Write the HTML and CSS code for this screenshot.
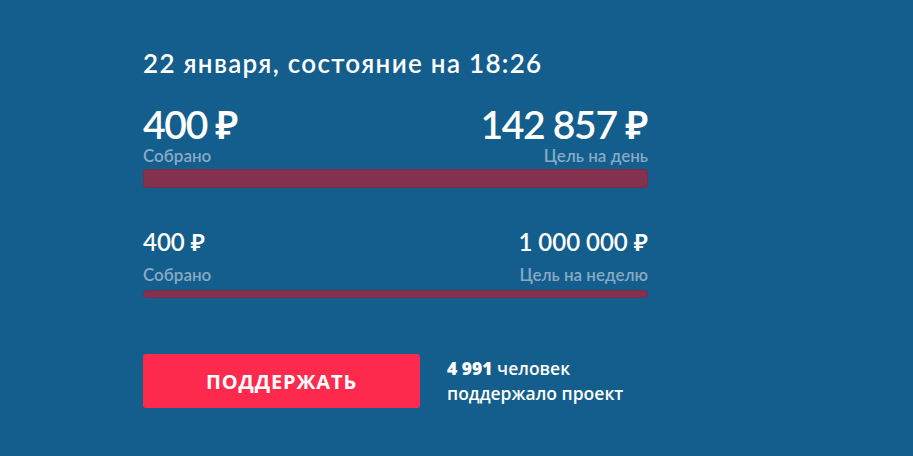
FILE: index.html
```html
<!DOCTYPE html>
<html lang="ru">
<head>
    <meta charset="utf-8">
    <title>Сбор средств</title>
    <link rel="stylesheet" href="styles.css">
</head>
<body>
    <div class="panel">
        <h1 class="title">22 января, состояние на 18:26</h1>

        <div class="goal goal-day">
            <div class="goal-row">
                <div class="sum">400 ₽</div>
                <div class="sum">142 857 ₽</div>
            </div>
            <div class="goal-row">
                <div class="label">Собрано</div>
                <div class="label">Цель на день</div>
            </div>
            <div class="bar"></div>
        </div>

        <div class="goal goal-week">
            <div class="goal-row">
                <div class="sum">400 ₽</div>
                <div class="sum">1 000 000 ₽</div>
            </div>
            <div class="goal-row">
                <div class="label">Собрано</div>
                <div class="label">Цель на неделю</div>
            </div>
            <div class="bar"></div>
        </div>

        <div class="support">
            <button class="btn">ПОДДЕРЖАТЬ</button>
            <p class="backers"><b>4 991</b> человек<br>поддержало проект</p>
        </div>
    </div>
</body>
</html>
```
FILE: styles.css
```css
*{
    margin: 0;
    padding: 0;
    box-sizing: border-box;
}
body{
    background: #135e8c;
    color: #fff;
    font-family: Lato, "Noto Sans", sans-serif;
    height: 456px;
    overflow: hidden;
}

.panel{
    width: 505px;
    margin-left: 143px;
    padding-top: 48px;
}

.title{
    font-size: 26px;
    font-weight: 600;
    line-height: 30px;
    letter-spacing: 1.3px;
}

.goal-row{
    display: flex;
    justify-content: space-between;
}

.sum{
    font-weight: 600;
}

.goal-day{
    margin-top: 24px;
}
.goal-day .sum{
    font-size: 39px;
    line-height: 44px;
    letter-spacing: -1.3px;
}
.goal-day .sum:last-child{
    margin-right: 1px;
}
.goal-day .bar{
    height: 19px;
    margin-top: 3px;
    border-radius: 3px;
}

.goal-week{
    margin-top: 40px;
}
.goal-week .sum{
    font-size: 24px;
    line-height: 28px;
}
.goal-week .label{
    margin-top: 9px;
}
.goal-week .bar{
    height: 8px;
    margin-top: 5px;
    border-radius: 4px;
}

.label{
    font-size: 17px;
    font-weight: 600;
    line-height: 20px;
    color: #88aac4;
}

.bar{
    background: #84304f;
    border: 1px solid #7b2d4d;
}

.support{
    display: flex;
    align-items: center;
    margin-top: 56px;
}

.btn{
    width: 277px;
    height: 54px;
    border: 0;
    border-radius: 3px;
    background: #fd2a4e;
    color: #fff;
    font-family: "Open Sans", sans-serif;
    font-weight: 700;
    font-size: 20px;
    letter-spacing: 0.9px;
}

.backers{
    margin-left: 27px;
    font-family: "Open Sans", sans-serif;
    font-size: 17.5px;
    line-height: 25px;
    font-weight: 600;
}
.backers b{
    font-weight: 800;
}
```
